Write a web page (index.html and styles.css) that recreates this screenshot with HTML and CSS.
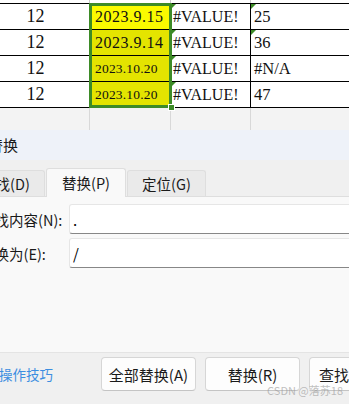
FILE: index.html
```html
<!DOCTYPE html>
<html lang="zh-CN">
<head>
    <meta charset="UTF-8">
    <meta name="viewport" content="width=device-width, initial-scale=1.0">
    <title>查找和替换</title>
    <link rel="stylesheet" href="styles.css">
</head>
<body>
    <div class="sheet">
        <div class="row row-top">
            <div class="cell"></div><div class="cell"></div><div class="cell"></div><div class="cell last"></div>
        </div>
        <div class="row">
            <div class="cell num">12</div>
            <div class="cell date active">2023.9.15</div>
            <div class="cell err">#VALUE!</div>
            <div class="cell val last err">25</div>
        </div>
        <div class="row">
            <div class="cell num">12</div>
            <div class="cell date">2023.9.14</div>
            <div class="cell err">#VALUE!</div>
            <div class="cell val last err">36</div>
        </div>
        <div class="row">
            <div class="cell num">12</div>
            <div class="cell date small">2023.10.20</div>
            <div class="cell err">#VALUE!</div>
            <div class="cell val last">#N/A</div>
        </div>
        <div class="row">
            <div class="cell num">12</div>
            <div class="cell date small">2023.10.20</div>
            <div class="cell err">#VALUE!</div>
            <div class="cell val last">47</div>
        </div>
        <div class="row row-empty">
            <div class="cell"></div><div class="cell"></div><div class="cell"></div><div class="cell last"></div>
        </div>

        <!-- selected range -->
        <div class="selection"><span class="handle"></span></div>
    </div>

    <div class="dialog">
        <div class="title">查找和替换</div>

        <div class="tabs">
            <div class="tab">查找(D)</div>
            <div class="tab tab-active">替换(P)</div>
            <div class="tab">定位(G)</div>
        </div>

        <div class="panel">
            <div class="field">
                <label for="findInput">查找内容(N):</label>
                <input type="text" id="findInput" value=".">
            </div>
            <div class="field">
                <label for="replaceInput">替换为(E):</label>
                <input type="text" id="replaceInput" value="/">
            </div>
        </div>

        <div class="footer">
            <a class="tips" href="#">操作技巧</a>
            <button>全部替换(A)</button>
            <button>替换(R)</button>
            <button class="btn-next">查找下一个(F)</button>
        </div>
    </div>

    <div class="watermark">CSDN @落苏18</div>
</body>
</html>
```

FILE: styles.css
```css
* {
    margin: 0;
    padding: 0;
    box-sizing: border-box;
}

body {
    width: 349px;
    height: 404px;
    overflow: hidden;
    position: relative;
    background-color: #f0f0f0;
}

/* spreadsheet */

.sheet {
    position: relative;
    height: 130px;
    background-color: #fff;
    border-bottom: 1px solid #cfcfcf;
    font-family: 'Liberation Serif', 'Times New Roman', serif;
    color: #111;
}

.row {
    display: grid;
    grid-template-columns: 90px 81px 80px 1fr;
    height: 26px;
    border-bottom: 1px solid #000;
}

.row-top {
    height: 4px;
}

.row-empty {
    height: 22px;
    border-bottom: none;
    background-color: #f3f3f3;
}

.cell {
    border-right: 1px solid #000;
    display: flex;
    align-items: center;
    white-space: nowrap;
    position: relative;
}

.row-top .cell {
    border-right-color: #c8c8c8;
}

.row-empty .cell {
    border-right-color: #d8d8d8;
}

.cell.last {
    border-right: none;
}

.num {
    justify-content: center;
    padding-right: 18px;
    font-size: 18px;
}

.date {
    padding-left: 5px;
    background-color: #e4e400;
    font-size: 16px;
    letter-spacing: 0.5px;
}

.date.active {
    background-color: #fafa00;
}

.date.small {
    font-size: 13.5px;
    letter-spacing: 0.2px;
}

.err {
    padding-left: 2px;
    font-size: 16px;
}

.val {
    padding-left: 3px;
    font-size: 16.5px;
}

/* little green error marker in the corner */
.err::before {
    content: '';
    position: absolute;
    top: 0;
    left: 0;
    border-top: 5px solid #3d8b27;
    border-right: 5px solid transparent;
}

.selection {
    position: absolute;
    left: 89px;
    top: 3px;
    width: 83px;
    height: 105px;
    border: 3px solid #3d8b27;
}

.handle {
    position: absolute;
    right: -6px;
    bottom: -6px;
    width: 7px;
    height: 7px;
    background-color: #3d8b27;
    border: 1px solid #fff;
}

/* dialog */

.dialog {
    margin-left: -60px;
    width: 480px;
    font-family: 'Noto Sans CJK SC', 'Noto Sans', sans-serif;
    color: #1a1a1a;
}

.title {
    height: 30px;
    line-height: 30px;
    padding-left: 3px;
    background-color: #eef2f9;
    font-size: 15px;
}

.tabs {
    display: flex;
    align-items: flex-end;
    gap: 1px;
    height: 36px;
    padding-left: 26px;
    background-color: #f0f0f0;
}

.tab {
    width: 79px;
    height: 26px;
    line-height: 25px;
    text-align: center;
    font-size: 14.5px;
    background-color: #eaeaea;
    border: 1px solid #dedede;
    border-bottom: none;
    border-radius: 3px 3px 0 0;
}

.tab-active {
    position: relative;
    width: 80px;
    height: 29px;
    line-height: 28px;
    margin-bottom: -1px;
    background-color: #f9f9f9;
}

.panel {
    height: 157px;
    padding: 7px 0 0 40px;
    background-color: #f9f9f9;
    border-top: 1px solid #dedede;
    border-bottom: 1px solid #e4e4e4;
}

.field {
    display: flex;
    align-items: center;
    margin-bottom: 4px;
}

.field label {
    width: 89px;
    font-size: 14.5px;
    white-space: nowrap;
}

.field input {
    flex: 1;
    height: 30px;
    padding: 0 3px;
    background-color: #fff;
    border: 1px solid #e6e6e6;
    border-bottom: 1px solid #878787;
    border-radius: 3px 0 0 3px;
    font-family: inherit;
    font-size: 15px;
    color: #000;
}

.footer {
    display: flex;
    align-items: center;
    gap: 9px;
    height: 51px;
    padding: 0 0 9px 59px;
    background-color: #f0f0f0;
}

.tips {
    width: 54px;
    margin-right: 39px;
    font-size: 13.5px;
    color: #3c8ee0;
    text-decoration: none;
    white-space: nowrap;
}

button {
    width: 95px;
    height: 34px;
    flex-shrink: 0;
    background-color: #fdfdfd;
    border: 1px solid #d6d6d6;
    border-bottom-color: #c4c4c4;
    border-radius: 4px;
    font-family: inherit;
    font-size: 15px;
    color: #1a1a1a;
    white-space: nowrap;
}

.btn-next {
    width: 120px;
    text-align: left;
    padding-left: 9px;
}

.watermark {
    position: absolute;
    right: 6px;
    bottom: 6px;
    font-family: 'Noto Sans CJK SC', sans-serif;
    font-size: 11px;
    color: rgba(150, 150, 150, 0.6);
}
```
